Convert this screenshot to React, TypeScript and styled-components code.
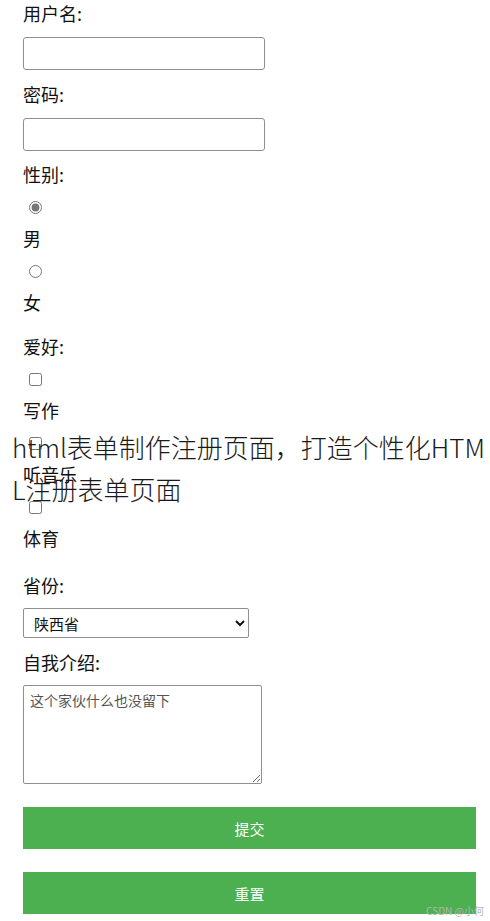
import styled, { createGlobalStyle } from 'styled-components';

const GlobalStyle = createGlobalStyle`
  html, body {
    margin: 0;
    padding: 0;
    background: #fff;
  }
  body {
    font-family: "Noto Sans CJK SC", "Noto Sans", sans-serif;
    color: #111;
  }
`;

const hobbies = ['写作', '听音乐', '体育'];

const App = () => {
  return (
    <>
      <GlobalStyle />
      <Page>
        <Form onSubmit={(e) => e.preventDefault()}>
          <Label>用户名:</Label>
          <TextInput type="text" />
          <Label $top={11}>密码:</Label>
          <TextInput type="password" />
          <Label $top={10}>性别:</Label>
          <Choice type="radio" name="sex" defaultChecked />
          <OptionText>男</OptionText>
          <Choice type="radio" name="sex" />
          <OptionText>女</OptionText>
          <Label $top={18}>爱好:</Label>
          {hobbies.map((h) => (
            <div key={h}>
              <Choice type="checkbox" $top={14} />
              <OptionText>{h}</OptionText>
            </div>
          ))}
          <Label $top={21}>省份:</Label>
          <Select defaultValue="sx">
            <option value="sx">陕西省</option>
            <option value="bj">北京市</option>
          </Select>
          <Label $top={11}>自我介绍:</Label>
          <TextArea placeholder="这个家伙什么也没留下" />
          <Button type="submit" $top={23}>提交</Button>
          <Button type="reset" $top={23}>重置</Button>
        </Form>
        <Caption>html表单制作注册页面，打造个性化HTML注册表单页面</Caption>
        <Watermark>CSDN @小何</Watermark>
      </Page>
    </>
  );
};

export default App;

const Page = styled.div`
  position: relative;
  width: 490px;
  height: 921px;
  overflow: hidden;
`;

const Form = styled.form`
  display: flex;
  flex-direction: column;
  align-items: flex-start;
  padding: 0 14px 0 23px;
`;

const Label = styled.label<{ $top?: number }>`
  display: block;
  margin-top: ${({ $top }) => $top ?? 0}px;
  font-size: 18px;
  line-height: 26px;
  height: 26px;
`;

const OptionText = styled.div`
  font-size: 18px;
  line-height: 26px;
  height: 26px;
`;

const TextInput = styled.input`
  box-sizing: border-box;
  width: 242px;
  height: 33px;
  margin: 11px 0 0;
  border: 1px solid #8f8f8f;
  border-radius: 3px;
  background: #fff;
`;

const Choice = styled.input<{ $top?: number }>`
  display: block;
  width: 13px;
  height: 13px;
  margin: ${({ $top }) => $top ?? 14}px 0 11px 6px;
  accent-color: #767676;
`;

const Select = styled.select`
  box-sizing: border-box;
  width: 226px;
  height: 30px;
  margin: 10px 0 0;
  padding: 0 6px;
  border: 1px solid #8f8f8f;
  border-radius: 2px;
  background: #fff;
  color: #111;
  font-family: "Noto Sans CJK SC", sans-serif;
  font-size: 15px;
`;

const TextArea = styled.textarea`
  box-sizing: border-box;
  width: 239px;
  height: 99px;
  margin: 10px 0 0;
  padding: 4px 6px;
  border: 1px solid #8f8f8f;
  border-radius: 2px;
  font-family: "Noto Sans CJK SC", sans-serif;
  font-size: 14px;
  line-height: 20px;
  &::placeholder {
    color: #555;
  }
`;

const Button = styled.button<{ $top?: number }>`
  width: 453px;
  height: 42px;
  margin-top: ${({ $top }) => $top ?? 0}px;
  border: none;
  background: #4caf50;
  color: #fff;
  font-family: "Noto Sans CJK SC", sans-serif;
  font-size: 15px;
  cursor: pointer;
`;

const Caption = styled.div`
  position: absolute;
  left: 12px;
  top: 426px;
  width: 478px;
  font-size: 26px;
  font-weight: 300;
  line-height: 42px;
  color: #1a1a1a;
  word-break: break-all;
`;

const Watermark = styled.div`
  position: absolute;
  right: 6px;
  bottom: 3px;
  font-size: 10px;
  color: #b5b5b5;
`;
